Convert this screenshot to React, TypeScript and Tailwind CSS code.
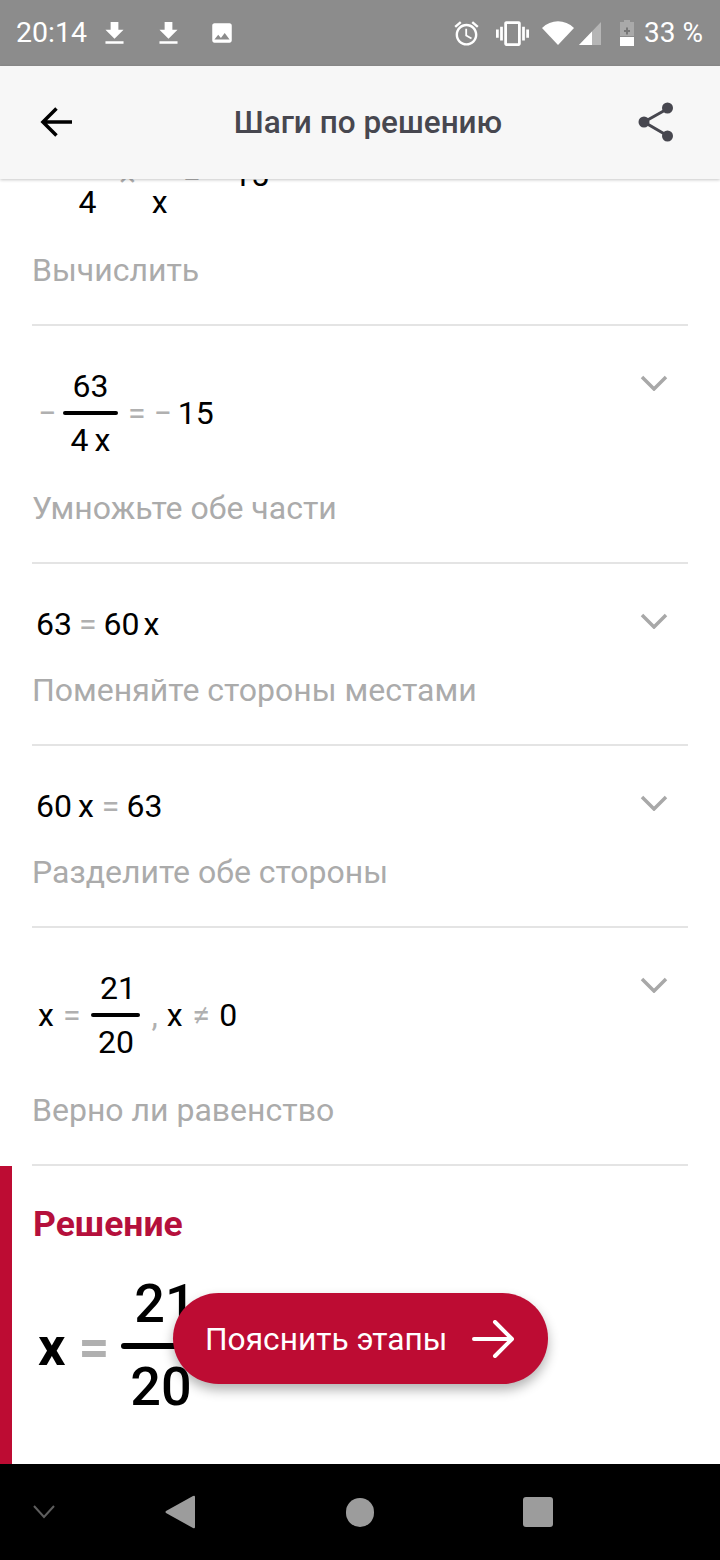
const RED = "bg-[#bd0c33]";

function Down() {
  return (
    <svg width="31" height="31" viewBox="0 0 24 24" fill="#fff">
      <path d="M19 9h-4V3H9v6H5l7 7 7-7zM5 18v2h14v-2H5z" />
    </svg>
  );
}

function StatusBar() {
  return (
    <div className="h-[66px] shrink-0 bg-[#8c8c8c] flex items-center text-white text-[28.500px] pl-[16px] pr-[17px]">
      <span>20:14</span>
      <span className="ml-[12px]"><Down /></span>
      <span className="ml-[23px]"><Down /></span>
      <svg className="ml-[25px]" width="26" height="26" viewBox="0 0 24 24" fill="#fff">
        <path fillRule="evenodd" d="M21 19V5c0-1.1-.9-2-2-2H5c-1.1 0-2 .9-2 2v14c0 1.1.9 2 2 2h14c1.1 0 2-.9 2-2zM8.500 13.500l2.500 3.010L14.500 12l4.500 6H5l3.500-4.500z" />
      </svg>
      <div className="flex-1" />
      <svg width="29" height="29" viewBox="0 0 24 24" fill="#fff">
        <path d="M22 5.720l-4.600-3.860-1.290 1.530 4.600 3.860L22 5.720zM7.880 3.390L6.600 1.860 2 5.710l1.290 1.530 4.590-3.850zM12.500 8H11v6l4.750 2.850.750-1.230-4-2.370V8zM12 4c-4.970 0-9 4.030-9 9s4.030 9 9 9 9-4.030 9-9-4.030-9-9-9zm0 16c-3.870 0-7-3.130-7-7s3.130-7 7-7 7 3.130 7 7-3.130 7-7 7z" />
      </svg>
      <svg className="ml-[15px]" width="33" height="33" viewBox="0 0 24 24" fill="#fff">
        <path d="M0 15h2V9H0v6zm3 2h2V7H3v10zm19-8v6h2V9h-2zm-3 8h2V7h-2v10zM16.500 3h-9C6.670 3 6 3.670 6 4.500v15c0 .83.67 1.500 1.500 1.500h9c.83 0 1.500-.67 1.500-1.500v-15c0-.83-.67-1.500-1.500-1.500zM16 19H8V5h8v14z" />
      </svg>
      <svg className="ml-[13px]" width="32" height="24" viewBox="0 0 32 24" fill="#fff">
        <path d="M0 7 C9 -2 23 -2 32 7 L16 24 Z" />
      </svg>
      <svg className="ml-[5px]" width="23" height="23" viewBox="0 0 23 23">
        <path d="M0 23 L22 0 V23 Z" fill="#b5b5b5" />
        <path d="M0 23 L13 9.500 V23 Z" fill="#fff" />
      </svg>
      <svg className="ml-[18px]" width="14" height="26" viewBox="0 0 14 26">
        <path d="M4 0 H10 V2 H14 V16 H0 V2 H4 Z" fill="#a9a9a9" />
        <path d="M0 17 H14 V26 H0 Z" fill="#fff" />
        <path d="M6 10 H4 V12 H6 V14.500 H8 V12 H10 V10 H8 V7.500 H6 Z" fill="#777" />
      </svg>
      <span className="ml-[10px] text-[28px]">33 %</span>
    </div>
  );
}

function Header() {
  return (
    <div className="relative z-10 h-[113px] shrink-0 bg-[#f7f7f7] shadow-[0_1px_3px_rgba(0,0,0,0.22)] flex items-center justify-between pl-[40px] pr-[46px]">
      <svg className="-mt-[2px]" width="32" height="32" viewBox="0 0 33 32" fill="none" stroke="#000" strokeWidth="3.600">
        <path d="M33 16 H3 M17 2 L3 16 L17 30" />
      </svg>
      <span className="ml-[26px] text-[31.500px] font-medium text-[#47474f]">Шаги по решению</span>
      <svg className="-mt-[2px]" width="36" height="40" viewBox="0 0 36 40" fill="#47474f" stroke="#47474f">
        <path d="M30 6.500 L6 20 L30 34" fill="none" strokeWidth="3" />
        <circle cx="29.500" cy="6" r="5.500" stroke="none" />
        <circle cx="6" cy="20" r="5.500" stroke="none" />
        <circle cx="29.500" cy="34" r="5.500" stroke="none" />
      </svg>
    </div>
  );
}

function Sym({ children, className = "" }: { children: React.ReactNode; className?: string }) {
  return <span className={`text-[#b0b0b0] ${className}`}>{children}</span>;
}

function Frac({ top, bottom, w, topClass = "" }: { top: React.ReactNode; bottom: React.ReactNode; w: string; topClass?: string }) {
  return (
    <div className={`flex flex-col items-center ${w}`}>
      <div className={`h-[50px] leading-[50px] ${topClass}`}>{top}</div>
      <div className="h-[4px] w-full rounded-full bg-black" />
      <div className="h-[50px] leading-[50px]">{bottom}</div>
    </div>
  );
}

function Chevron({ className = "" }: { className?: string }) {
  return (
    <svg className={className} width="28" height="16" viewBox="0 0 28 16" fill="none" stroke="#a8a8a8" strokeWidth="3.500">
      <path d="M2 2 L14 14 L26 2" />
    </svg>
  );
}

function Step({ label, frac, children, clipped }: { label: string; frac?: boolean; children: React.ReactNode; clipped?: boolean }) {
  return (
    <div className={`mx-[32px] box-border border-b-2 border-[#e4e4e4] ${frac ? "h-[238px]" : "h-[182px]"} ${clipped ? "-mt-[91px]" : ""}`}>
      <div className="flex justify-between items-start pt-[35px] pr-[20px]">
        <div className="flex items-center text-[32px] leading-[50px] text-black pl-[4px]">{children}</div>
        {!clipped && <Chevron className="mt-[14px]" />}
      </div>
      <div className={`${frac ? "mt-[21px]" : "mt-[19px]"} text-[32px] leading-[44px] text-[#ababab]`}>{label}</div>
    </div>
  );
}

function Nav() {
  return (
    <div className="h-[96px] shrink-0 bg-black flex items-center pl-[32px]">
      <svg width="24" height="14" viewBox="0 0 24 14" fill="none" stroke="#5e5e5e" strokeWidth="2">
        <path d="M2 1 L12 12 L22 1" />
      </svg>
      <svg className="ml-[109px]" width="30" height="34" viewBox="0 0 30 34" fill="#9c9c9c">
        <path d="M28 1 Q30 0 30 2 V32 Q30 34 28 33 L1 18 Q0 17 1 16 Z" />
      </svg>
      <div className="ml-[151px] w-[28px] h-[29px] rounded-full bg-[#9c9c9c]" />
      <div className="ml-[149px] w-[30px] h-[30px] rounded-[3px] bg-[#9c9c9c]" />
    </div>
  );
}

export default function App() {
  return (
    <div className="relative w-[720px] h-[1560px] overflow-hidden bg-white flex flex-col font-['Roboto',sans-serif]">
      <StatusBar />
      <Header />
      <div className="flex-1 min-h-0 overflow-hidden flex flex-col">
        <Step label="Вычислить" frac clipped>
          <Sym className="ml-[2px] mr-[10px] w-[16px]">−</Sym>
          <Frac w="w-[47px]" top="21" bottom="4" />
          <Sym className="ml-[8px] mr-[11px]">×</Sym>
          <Frac w="w-[25px]" top="3" bottom="x" />
          <Sym className="ml-[11px] mr-[10px]">=</Sym>
          <Sym className="mr-[4px]">−</Sym>
          <span>15</span>
        </Step>
        <Step label="Умножьте обе части" frac>
          <Sym className="ml-[2px] mr-[9px] w-[16px]">−</Sym>
          <Frac w="w-[55px]" top="63" bottom={<span>4<span className="ml-[6px]">x</span></span>} />
          <Sym className="ml-[10px] mr-[8px]">=</Sym>
          <Sym className="mr-[6px]">−</Sym>
          <span>15</span>
        </Step>
        <Step label="Поменяйте стороны местами">
          <span>63</span>
          <Sym className="mx-[7px]">=</Sym>
          <span>60</span>
          <span className="ml-[4px]">x</span>
        </Step>
        <Step label="Разделите обе стороны">
          <span>60</span>
          <span className="ml-[6px]">x</span>
          <Sym className="ml-[8px] mr-[7px]">=</Sym>
          <span>63</span>
        </Step>
        <Step label="Верно ли равенство" frac>
          <span className="ml-[2px]">x</span>
          <Sym className="ml-[9px] mr-[11px]">=</Sym>
          <Frac w="w-[49px]" top="21" bottom="20" topClass="pl-[4px]" />
          <Sym className="ml-[11px] mr-[9px]">,</Sym>
          <span>x</span>
          <Sym className="ml-[10px] mr-[9px]">≠</Sym>
          <span>0</span>
        </Step>
        <div className="flex-1 border-l-[12px] border-[#bd0c33] pl-[21px]">
          <div className="pt-[38px] text-[35.500px] leading-[40px] font-bold text-[#b5103c]">Решение</div>
          <div className="mt-[20px] flex items-center pl-[5px] text-black text-[54px] font-medium">
            <span className="font-bold text-[54px] relative top-[2px]">x</span>
            <span className="ml-[13px] mr-[12px] text-[#b0b0b0] text-[54px] font-bold relative top-[2px]">=</span>
            <div className="flex flex-col items-center w-[79px]">
              <div className="h-[79px] leading-[79px] pl-[8px] whitespace-nowrap">21</div>
              <div className="h-[6px] w-full rounded-full bg-black" />
              <div className="h-[76px] leading-[76px]">20</div>
            </div>
          </div>
        </div>
      </div>
      <Nav />
      <button className={`absolute left-[173px] top-[1293px] w-[375px] h-[91px] rounded-full ${RED} shadow-[0_6px_12px_rgba(0,0,0,0.3)] flex items-center pl-[32px] pr-[34px] justify-between text-white text-[31.700px]`}>
        <span className="mt-[3px]">Пояснить этапы</span>
        <svg width="42" height="38" viewBox="0 0 42 38" fill="none" stroke="#fff" strokeWidth="4" strokeLinecap="round" strokeLinejoin="round">
          <path d="M2 19 H39 M23 2 L40 19 L23 36" />
        </svg>
      </button>
    </div>
  );
}
